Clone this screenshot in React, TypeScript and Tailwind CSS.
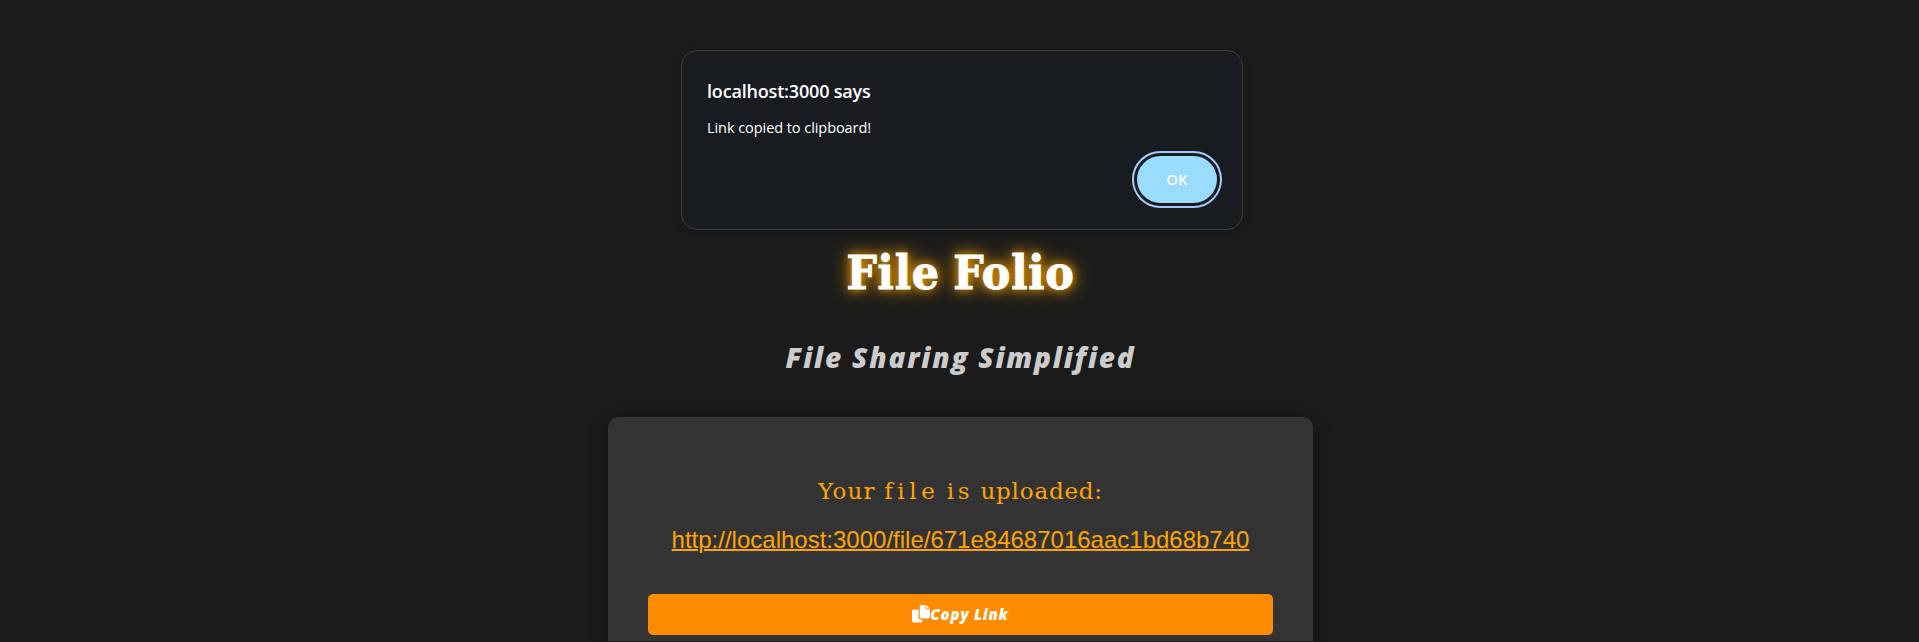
function CopyIcon() {
  return (
    <svg width="18" height="18" viewBox="0 0 18 18" fill="currentColor" className="-mt-[2px] shrink-0">
      <path d="M1.6 4.4H6.6V12.1A2.6 2.6 0 0 0 9.2 14.7H10.3V15.9A1.6 1.6 0 0 1 8.7 17.5H1.6A1.6 1.6 0 0 1 0 15.9V6A1.6 1.6 0 0 1 1.6 4.4Z" />
      <path d="M9.4 0H13.6V3.3A1.1 1.1 0 0 0 14.7 4.4H18V11.8A1.6 1.6 0 0 1 16.4 13.4H9.4A1.6 1.6 0 0 1 7.8 11.8V1.6A1.6 1.6 0 0 1 9.4 0Z" />
      <path d="M14.4 0L18 3.6H14.4Z" />
    </svg>
  );
}

function AlertDialog() {
  return (
    <div
      role="alertdialog"
      className="absolute left-[681px] top-[50px] flex h-[180px] w-[562px] flex-col rounded-[16px] border border-[#3c3d3f] bg-[#181b1f] pl-[25px] pt-[26px] font-['Open_Sans',sans-serif] text-white shadow-[0_2px_10px_rgba(0,0,0,0.2)]"
    >
      <div className="h-[28px] whitespace-nowrap text-[18px] font-semibold leading-[28px] tracking-[-0.18px]">
        localhost:3000 says
      </div>
      <div className="mt-[12px] h-[22px] whitespace-nowrap text-[14.5px] leading-[22px] tracking-[-0.06px]">
        Link copied to clipboard!
      </div>
      <button className="mr-[25px] mt-[17px] h-[47px] w-[80px] self-end rounded-full bg-[#99dcff] text-[15px] font-semibold leading-[47px] text-white outline-2 outline-offset-3 outline-[#a8c7fa]">
        OK
      </button>
    </div>
  );
}

export default function App() {
  return (
    <div className="relative h-[642px] w-full overflow-hidden border-b border-[#1c1518] bg-[#1b1b1b]">
      <main className="flex flex-col items-center pt-[240px] pl-[2px]">
        <h1 className="h-[64px] whitespace-nowrap font-['DejaVu_Serif_Condensed','DejaVu_Serif',serif] text-[47.5px] font-bold leading-[64px] tracking-[0.8px] [word-spacing:-2px] text-white [-webkit-text-stroke:1px_white] [text-shadow:0_0_20px_#ffa500,0_0_10px_#ffa500]">
          File Folio
        </h1>
        <h2 className="mt-[33px] h-[40px] whitespace-nowrap font-['Open_Sans',sans-serif] text-[28px] font-extrabold italic leading-[40px] tracking-[1.8px] text-[#cccccc]">
          File Sharing Simplified
        </h2>
        <section className="mt-[40px] flex h-[300px] w-[705px] flex-col items-center rounded-[10px] bg-[#333333] px-[40px] pt-[56px] shadow-[0_4px_20px_rgba(0,0,0,0.3)]">
          <p className="h-[36px] whitespace-nowrap font-['DejaVu_Serif',serif] text-[23px] leading-[36px] text-[#ffa500]">
            <span className="tracking-[1.2px]">Your </span>
            <span className="tracking-[4.6px]">file</span>{" "}
            <span className="tracking-[3.6px]">is</span>{" "}
            <span className="tracking-[0.8px]">uploaded:</span>
          </p>
          <a className="mt-[15px] h-[32px] whitespace-nowrap font-['Liberation_Sans',sans-serif] text-[24px] leading-[32px] text-[#ffa500] underline decoration-2">
            http://localhost:3000/file/671e84687016aac1bd68b740
          </a>
          <button className="mt-[38px] flex h-[41px] w-full shrink-0 items-center justify-center rounded-[5px] bg-[#ff8c00] font-['Open_Sans',sans-serif] text-[15px] font-extrabold italic tracking-[0.8px] text-white">
            <CopyIcon />
            Copy Link
          </button>
        </section>
      </main>
      <AlertDialog />
    </div>
  );
}
